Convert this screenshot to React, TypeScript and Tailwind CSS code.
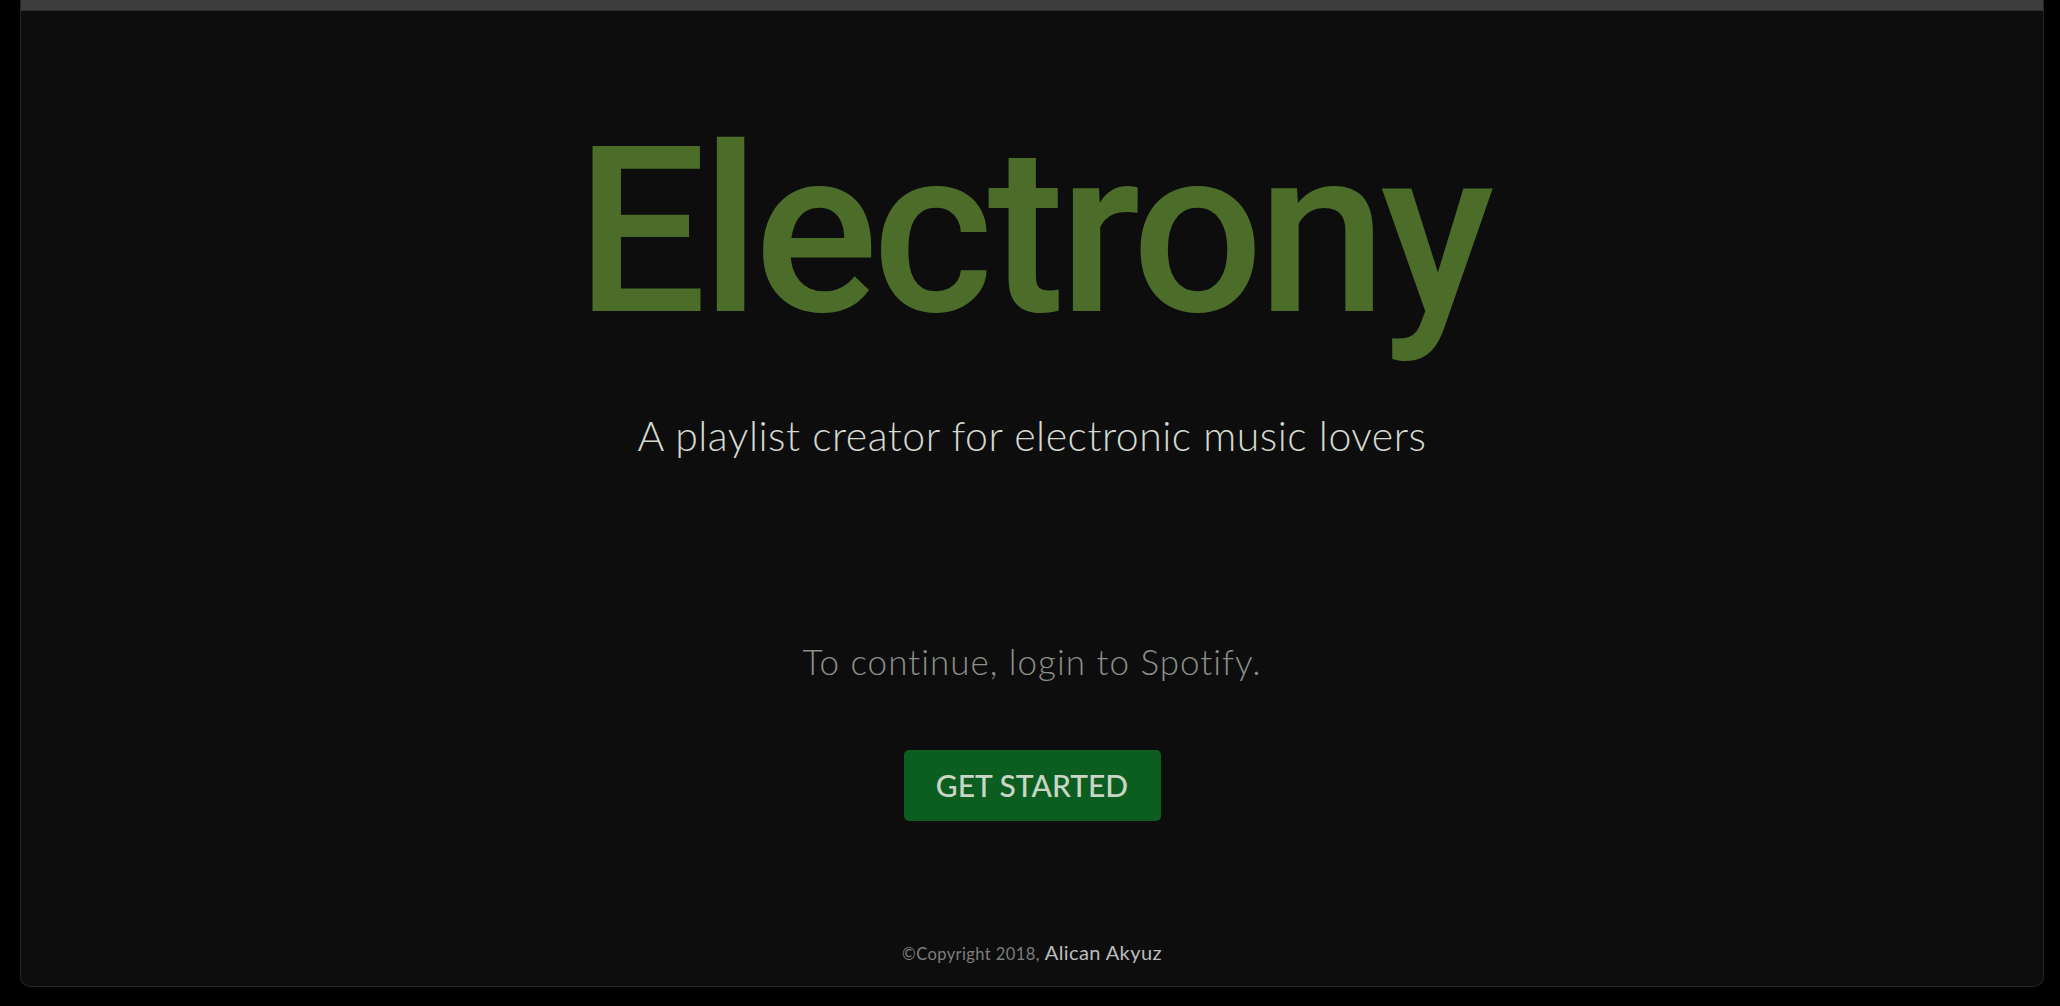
export default function App() {
  return (
    <div className="w-full h-[1006px] bg-black">
      <div className="ml-[20px] mr-[16px] h-[987px] bg-[#0d0d0d] border border-t-0 border-[#262626] rounded-b-[10px] flex flex-col items-center">
        <div className="w-full h-[11px] bg-[#3e3e3e] border-b border-[#2e2e2e] shrink-0" />
        <h1
          className="mt-[105px] text-[232px] leading-none font-medium text-[#4b6d29] tracking-[-6px]"
          style={{ fontFamily: "Roboto, sans-serif" }}
        >
          Electrony
        </h1>
        <p
          className="mt-[67px] text-[41px] leading-none font-light text-[#d3dacf] tracking-[0.5px]"
          style={{ fontFamily: "Lato, sans-serif" }}
        >
          A playlist creator for electronic music lovers
        </p>
        <p
          className="mt-[188px] text-[35px] leading-none font-light text-[#8b9088] tracking-[1px]"
          style={{ fontFamily: "Lato, sans-serif" }}
        >
          To continue, login to Spotify.
        </p>
        <button
          className="mt-[71px] w-[257px] h-[71px] rounded-[5px] bg-[#0b5e20] text-[#c9d5c5] text-[30px] font-medium"
          style={{ fontFamily: "Lato, sans-serif" }}
        >
          GET STARTED
        </button>
        <div
          className="mt-[116px] flex items-baseline gap-[5px] tracking-[0.4px]"
          style={{ fontFamily: "Lato, sans-serif" }}
        >
          <span className="text-[16.5px] text-[#7d7d7d]">©Copyright 2018,</span>
          <span className="text-[20px] text-[#bdbdbd]">Alican Akyuz</span>
        </div>
      </div>
    </div>
  );
}
